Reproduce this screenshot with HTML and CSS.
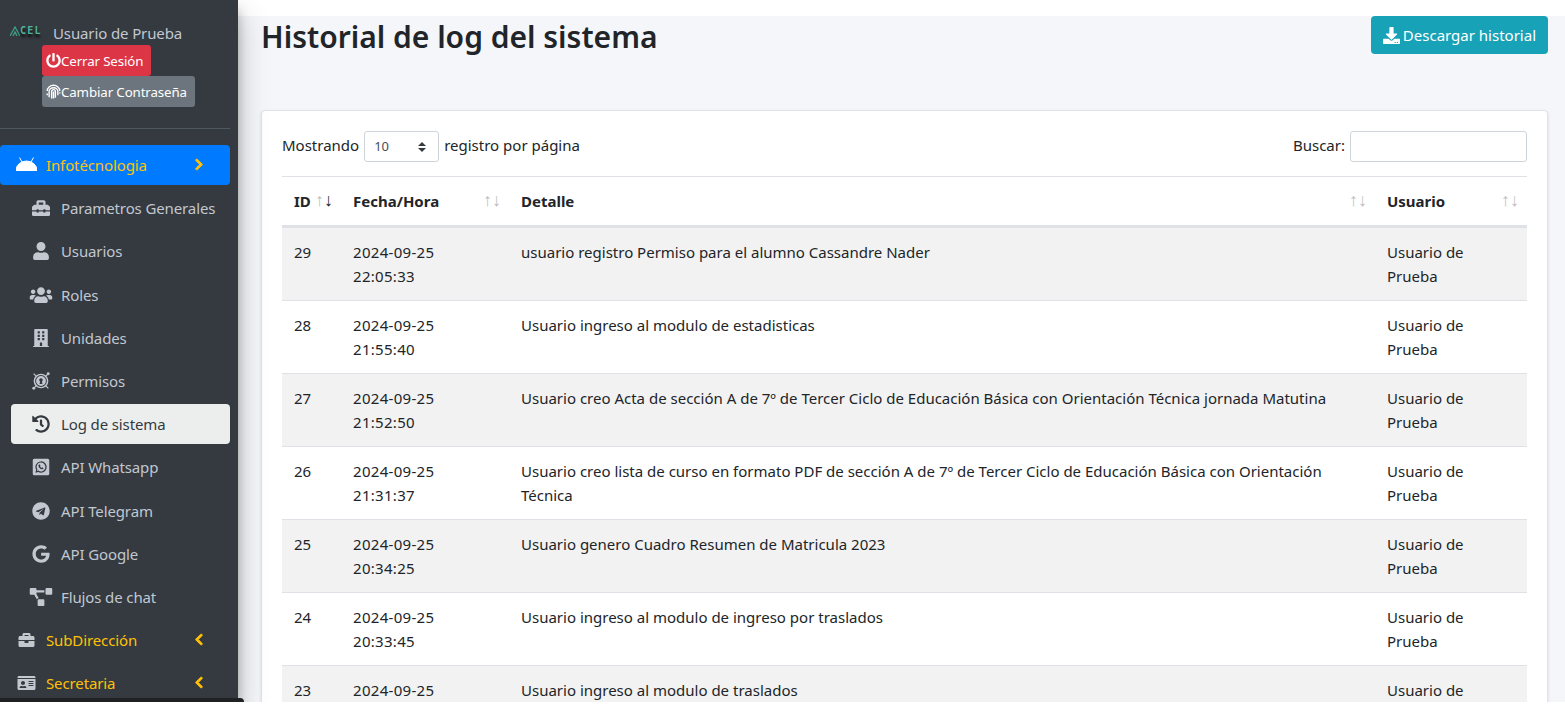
FILE: index.html
```html
<!DOCTYPE html>
<html lang="es">
<head>
<meta charset="utf-8">
<title>Historial de log del sistema</title>
<link rel="stylesheet" href="styles.css">
</head>
<body>
<div class="app">
  <aside class="sidebar">
    <div class="user">
      <div class="logo"><svg class="logo-mark" viewBox="0 0 10 10"><path d="M0 10 5 1l5 9M3 10l2-4 2 4" fill="none" stroke="#3f9f86" stroke-width="1.300"/></svg><span class="logo-text">CEL</span></div>
      <div class="user-info">
        <div class="user-name">Usuario de Prueba</div>
        <a class="btn-side btn-red"><svg class="btn-icon" viewBox="0 0 512 512"><path d="M400 54.1c63 45 104 118.6 104 201.9 0 136.8-110.8 247.7-247.5 248C120 504.3 8.2 393 8 256.4 7.9 173.1 48.9 99.3 111.8 54.2c11.7-8.3 28-4.8 35 7.7L162.6 90c5.9 10.5 3.1 23.8-6.6 31-41.5 30.8-68 79.6-68 134.9-.1 92.3 74.5 168.1 168 168.1 91.6 0 168.6-74.2 168-169.1-.3-51.8-24.7-101.8-68.1-134-9.7-7.2-12.4-20.5-6.5-30.9l15.8-28.1c7-12.4 23.2-16.1 34.8-7.8zM296 264V24c0-13.3-10.7-24-24-24h-32c-13.3 0-24 10.7-24 24v240c0 13.3 10.7 24 24 24h32c13.3 0 24-10.7 24-24z"/></svg>Cerrar Sesión</a>
        <a class="btn-side btn-grey"><svg class="btn-icon" viewBox="0 0 24 24" fill="none" stroke="#fff" stroke-width="2.200"><path d="M2 11a10 9 0 0 1 20 0M5 21v-9a7 6 0 0 1 14 0v6M9 23V12a3 3 0 0 1 6 0v10M12 12v11M2 15v3M22 13v2"/></svg>Cambiar Contraseña</a>
      </div>
    </div>
    <div class="divider"></div>
    <nav class="nav">
      <a class="nav-main nav-open">
        <svg class="main-icon" viewBox="0 0 21 16"><path d="M0 13.500a10.500 9.500 0 0 1 21 0zM3.500 0.500l2.500 4.500M17.500 0.500l-2.500 4.500" fill="#fff" stroke="#fff" stroke-width="1"/></svg>
        <span class="nav-label">Infotécnologia</span>
        <svg class="chev" viewBox="0 0 320 512"><path d="M285.476 272.971L91.132 467.314c-9.373 9.373-24.569 9.373-33.941 0l-22.667-22.667c-9.357-9.357-9.375-24.522-.04-33.901L188.505 256 34.484 101.255c-9.335-9.379-9.317-24.544.04-33.901l22.667-22.667c9.373-9.373 24.569-9.373 33.941 0L285.475 239.03c9.373 9.372 9.373 24.568.001 33.941z"/></svg>
      </a>
      <a class="nav-sub"><svg class="sub-icon" viewBox="0 0 512 512"><path d="M502.63 214.63l-45.25-45.25c-6-6-14.14-9.37-22.63-9.37H384V80c0-26.51-21.49-48-48-48H176c-26.51 0-48 21.49-48 48v80H77.25c-8.49 0-16.62 3.37-22.63 9.37L9.37 214.63c-6 6-9.37 14.14-9.37 22.63V320h128v-16c0-8.84 7.16-16 16-16h32c8.84 0 16 7.16 16 16v16h128v-16c0-8.84 7.16-16 16-16h32c8.84 0 16 7.16 16 16v16h128v-82.75c0-8.48-3.37-16.62-9.37-22.62zM320 160H192V96h128v64zm64 208c0 8.84-7.16 16-16 16h-32c-8.84 0-16-7.16-16-16v-16H192v16c0 8.84-7.16 16-16 16h-32c-8.84 0-16-7.16-16-16v-16H0v96c0 17.67 14.33 32 32 32h448c17.67 0 32-14.33 32-32v-96H384v16z"/></svg>Parametros Generales</a>
      <a class="nav-sub"><svg class="sub-icon" viewBox="0 0 448 512"><path d="M224 256c70.7 0 128-57.3 128-128S294.7 0 224 0 96 57.3 96 128s57.3 128 128 128zm89.6 32h-16.7c-22.2 10.2-46.9 16-72.9 16s-50.6-5.8-72.9-16h-16.7C60.2 288 0 348.2 0 422.4V464c0 26.5 21.5 48 48 48h352c26.5 0 48-21.5 48-48v-41.6c0-74.2-60.2-134.4-134.4-134.4z"/></svg>Usuarios</a>
      <a class="nav-sub"><svg class="sub-icon" viewBox="0 0 640 512"><path d="M96 224c35.3 0 64-28.7 64-64s-28.7-64-64-64-64 28.7-64 64 28.7 64 64 64zm448 0c35.3 0 64-28.7 64-64s-28.7-64-64-64-64 28.7-64 64 28.7 64 64 64zm32 32h-64c-17.6 0-33.5 7.1-45.1 18.6 40.3 22.1 68.9 62 75.1 109.4h66c17.7 0 32-14.3 32-32v-32c0-35.3-28.7-64-64-64zm-256 0c61.9 0 112-50.1 112-112S381.9 32 320 32 208 82.1 208 144s50.1 112 112 112zm76.8 32h-8.3c-20.8 10-43.9 16-68.5 16s-47.6-6-68.5-16h-8.3C179.6 288 128 339.6 128 403.2V432c0 26.5 21.5 48 48 48h288c26.5 0 48-21.5 48-48v-28.8c0-63.6-51.6-115.2-115.2-115.2zm-223.7-13.4C161.5 263.1 145.6 256 128 256H64c-35.3 0-64 28.7-64 64v32c0 17.7 14.3 32 32 32h65.9c6.3-47.4 34.9-87.3 75.2-109.4z"/></svg>Roles</a>
      <a class="nav-sub"><svg class="sub-icon" viewBox="0 0 448 512"><path d="M436 480h-20V24c0-13.255-10.745-24-24-24H56C42.745 0 32 10.745 32 24v456H12c-6.627 0-12 5.373-12 12v20h448v-20c0-6.627-5.373-12-12-12zM128 76c0-6.627 5.373-12 12-12h40c6.627 0 12 5.373 12 12v40c0 6.627-5.373 12-12 12h-40c-6.627 0-12-5.373-12-12V76zm0 96c0-6.627 5.373-12 12-12h40c6.627 0 12 5.373 12 12v40c0 6.627-5.373 12-12 12h-40c-6.627 0-12-5.373-12-12v-40zm52 148h-40c-6.627 0-12-5.373-12-12v-40c0-6.627 5.373-12 12-12h40c6.627 0 12 5.373 12 12v40c0 6.627-5.373 12-12 12zm76 160h-64v-84c0-6.627 5.373-12 12-12h40c6.627 0 12 5.373 12 12v84zm64-172c0 6.627-5.373 12-12 12h-40c-6.627 0-12-5.373-12-12v-40c0-6.627 5.373-12 12-12h40c6.627 0 12 5.373 12 12v40zm0-96c0 6.627-5.373 12-12 12h-40c-6.627 0-12-5.373-12-12v-40c0-6.627 5.373-12 12-12h40c6.627 0 12 5.373 12 12v40zm0-96c0 6.627-5.373 12-12 12h-40c-6.627 0-12-5.373-12-12V76c0-6.627 5.373-12 12-12h40c6.627 0 12 5.373 12 12v40z"/></svg>Unidades</a>
      <a class="nav-sub"><svg class="sub-icon" viewBox="1 1 22 22"><path fill-rule="evenodd" d="M12 3a9 9 0 1 0 0 18 9 9 0 0 0 0-18zm0 1.800a7.200 7.200 0 1 1 0 14.400 7.200 7.200 0 0 1 0-14.400z"/><path fill-rule="evenodd" d="M12 6a6 6 0 1 0 0 12 6 6 0 0 0 0-12zm0 2.500a2.200 2.200 0 0 1 1.100 4.100l.7 3.100h-3.600l.7-3.100A2.200 2.200 0 0 1 12 8.500z"/><path d="M3 3l4 4M21 3l-4 4M3 21l4-4M21 21l-4-4" stroke="#c2c7d0" stroke-width="1.500"/><circle cx="20.800" cy="3.200" r="1.800"/><circle cx="3.200" cy="20.800" r="1.800"/></svg>Permisos</a>
      <a class="nav-sub nav-active"><svg class="sub-icon" viewBox="0 0 512 512"><path d="M504 255.531c.253 136.64-111.18 248.372-247.82 248.468-59.015.042-113.223-20.53-155.822-54.911-11.077-8.94-11.905-25.541-1.839-35.607l11.267-11.267c8.609-8.609 22.353-9.551 31.891-1.984C173.062 425.135 212.781 440 256 440c101.705 0 184-82.311 184-184 0-101.705-82.311-184-184-184-48.814 0-93.149 18.969-126.068 49.932l50.754 50.754c10.08 10.08 2.941 27.314-11.313 27.314H24c-8.837 0-16-7.163-16-16V38.627c0-14.254 17.234-21.393 27.314-11.314l49.372 49.372C129.209 34.136 189.552 8 256 8c136.81 0 247.747 110.78 248 247.531zm-180.912 78.784l9.823-12.63c8.138-10.463 6.253-25.542-4.21-33.679L288 256.349V152c0-13.255-10.745-24-24-24h-16c-13.255 0-24 10.745-24 24v135.651l65.409 50.874c10.463 8.137 25.541 6.253 33.679-4.21z"/></svg>Log de sistema</a>
      <a class="nav-sub"><svg class="sub-icon" viewBox="0 0 24 24"><path fill-rule="evenodd" d="M3 1h18a2 2 0 0 1 2 2v18a2 2 0 0 1-2 2H3a2 2 0 0 1-2-2V3a2 2 0 0 1 2-2zm9 3.500a7.500 7.500 0 0 0-6.400 11.300L4.500 19.500l3.800-1a7.500 7.500 0 1 0 3.700-14zm0 1.600a5.900 5.900 0 1 1-3.400 10.700l-1.900.5.500-1.800A5.900 5.900 0 0 1 12 6.100zM9.500 8.500c-.8.600-1.100 1.500-.7 2.700.6 1.700 2.300 3.300 4 3.800 1.100.3 2-.2 2.400-1l-.1-.8-1.500-.8-.8.8c-.9-.4-1.800-1.200-2.200-2.100l.7-.8-.7-1.700z"/></svg>API Whatsapp</a>
      <a class="nav-sub"><svg class="sub-icon" viewBox="0 0 496 512"><path d="M248 8C111 8 0 119 0 256s111 248 248 248 248-111 248-248S385 8 248 8zm121.8 169.9l-40.7 191.8c-3 13.6-11.1 16.9-22.4 10.5l-62-45.7-29.9 28.8c-3.3 3.3-6.1 6.1-12.5 6.1l4.4-63.1 114.9-103.8c5-4.4-1.1-6.9-7.7-2.500l-142 89.4-61.2-19.1c-13.3-4.2-13.6-13.3 2.8-19.7l239.1-92.2c11.1-4 20.8 2.7 17.2 19.5z"/></svg>API Telegram</a>
      <a class="nav-sub"><svg class="sub-icon" viewBox="0 0 488 512"><path d="M488 261.8C488 403.3 387.1 504 248 504 110.8 504 0 393.2 0 256S110.8 8 248 8c66.8 0 123 24.5 166.3 64.9l-67.5 64.9C258.5 52.6 94.3 116.6 94.3 256c0 86.5 69.1 156.6 153.7 156.6 98.2 0 135-70.4 140.8-106.9H248v-85.3h236.1c2.3 12.7 3.9 24.9 3.9 41.4z"/></svg>API Google</a>
      <a class="nav-sub"><svg class="sub-icon" viewBox="0 0 640 512"><path d="M384 320H256c-17.67 0-32 14.33-32 32v128c0 17.67 14.33 32 32 32h128c17.67 0 32-14.33 32-32V352c0-17.67-14.33-32-32-32zM192 32c0-17.67-14.33-32-32-32H32C14.33 0 0 14.33 0 32v128c0 17.67 14.33 32 32 32h95.72l73.16 128.04C211.98 300.98 232.4 288 256 288h.28L192 175.51V128h224V64H192V32zM608 0H480c-17.67 0-32 14.33-32 32v128c0 17.67 14.33 32 32 32h128c17.67 0 32-14.33 32-32V32c0-17.67-14.33-32-32-32z"/></svg>Flujos de chat</a>
      <a class="nav-main">
        <svg class="main-icon" viewBox="0 0 512 512"><path d="M320 336c0 8.84-7.16 16-16 16h-96c-8.84 0-16-7.16-16-16v-48H0v144c0 25.6 22.4 48 48 48h416c25.6 0 48-22.4 48-48V288H320v48zm144-208h-80V80c0-25.6-22.4-48-48-48H176c-25.6 0-48 22.4-48 48v48H48c-25.6 0-48 22.4-48 48v80h512v-80c0-25.6-22.4-48-48-48zm-144 0H192V96h128v32z"/></svg>
        <span class="nav-label">SubDirección</span>
        <svg class="chev" viewBox="0 0 320 512"><path d="M34.52 239.03L228.87 44.69c9.37-9.37 24.57-9.37 33.94 0l22.67 22.67c9.36 9.36 9.37 24.52.04 33.9L131.49 256l154.02 154.75c9.34 9.38 9.32 24.54-.04 33.9l-22.67 22.67c-9.37 9.37-24.57 9.37-33.94 0L34.52 272.97c-9.37-9.37-9.37-24.57 0-33.94z"/></svg>
      </a>
      <a class="nav-main">
        <svg class="main-icon" viewBox="0 0 576 512"><path d="M528 32H48C21.5 32 0 53.5 0 80v16h576V80c0-26.5-21.5-48-48-48zM0 432c0 26.5 21.5 48 48 48h480c26.5 0 48-21.5 48-48V128H0v304zm352-232c0-4.4 3.6-8 8-8h144c4.4 0 8 3.6 8 8v16c0 4.4-3.6 8-8 8H360c-4.4 0-8-3.6-8-8v-16zm0 64c0-4.4 3.6-8 8-8h144c4.4 0 8 3.6 8 8v16c0 4.4-3.6 8-8 8H360c-4.4 0-8-3.6-8-8v-16zm0 64c0-4.4 3.6-8 8-8h144c4.4 0 8 3.6 8 8v16c0 4.4-3.6 8-8 8H360c-4.4 0-8-3.6-8-8v-16zM176 192c35.3 0 64 28.7 64 64s-28.7 64-64 64-64-28.7-64-64 28.7-64 64-64zM67.1 396.2C75.5 370.5 99.6 352 128 352h8.2c12.3 5.1 25.7 8 39.8 8s27.6-2.9 39.8-8h8.2c28.4 0 52.5 18.5 60.9 44.2 3.2 9.9-5.2 19.8-15.6 19.8H82.7c-10.4 0-18.8-10-15.6-19.8z"/></svg>
        <span class="nav-label">Secretaria</span>
        <svg class="chev" viewBox="0 0 320 512"><path d="M34.52 239.03L228.87 44.69c9.37-9.37 24.57-9.37 33.94 0l22.67 22.67c9.36 9.36 9.37 24.52.04 33.9L131.49 256l154.02 154.75c9.34 9.38 9.32 24.54-.04 33.9l-22.67 22.67c-9.37 9.37-24.57 9.37-33.94 0L34.52 272.97c-9.37-9.37-9.37-24.57 0-33.94z"/></svg>
      </a>
    </nav>
  </aside>
  <main class="main">
    <div class="content">
      <header class="page-head">
        <h1 class="title">Historial de log del sistema</h1>
        <a class="btn-download"><svg class="dl-icon" viewBox="0 0 512 512"><path d="M216 0h80c13.3 0 24 10.7 24 24v168h87.7c17.8 0 26.7 21.5 14.1 34.1L269.7 378.3c-7.5 7.5-19.8 7.5-27.3 0L90.1 226.1c-12.6-12.6-3.7-34.1 14.1-34.1H192V24c0-13.3 10.7-24 24-24zm296 376v112c0 13.3-10.7 24-24 24H24c-13.3 0-24-10.7-24-24V376c0-13.3 10.7-24 24-24h146.7l49 49c20.1 20.1 52.5 20.1 72.6 0l49-49H488c13.3 0 24 10.7 24 24zm-124 88c0-11-9-20-20-20s-20 9-20 20 9 20 20 20 20-9 20-20zm64 0c0-11-9-20-20-20s-20 9-20 20 9 20 20 20 20-9 20-20z"/></svg>Descargar historial</a>
      </header>
      <section class="card">
        <div class="controls">
          <label class="ctrl">Mostrando <select class="page-size"><option>10</option></select> registro por página</label>
          <label class="ctrl">Buscar: <input class="search" type="text"></label>
        </div>
        <table class="table">
          <colgroup><col class="c-id"><col class="c-date"><col class="c-detail"><col class="c-user"></colgroup>
          <thead>
            <tr>
              <th>ID<span class="sort"><i class="off">↑</i><i class="on">↓</i></span></th>
              <th>Fecha/Hora<span class="sort"><i class="off">↑</i><i class="off">↓</i></span></th>
              <th>Detalle<span class="sort"><i class="off">↑</i><i class="off">↓</i></span></th>
              <th>Usuario<span class="sort"><i class="off">↑</i><i class="off">↓</i></span></th>
            </tr>
          </thead>
          <tbody>
            <tr><td>29</td><td>2024-09-25<br>22:05:33</td><td>usuario registro Permiso para el alumno Cassandre Nader</td><td>Usuario de Prueba</td></tr>
            <tr><td>28</td><td>2024-09-25<br>21:55:40</td><td>Usuario ingreso al modulo de estadisticas</td><td>Usuario de Prueba</td></tr>
            <tr><td>27</td><td>2024-09-25<br>21:52:50</td><td>Usuario creo Acta de sección A de 7º de Tercer Ciclo de Educación Básica con Orientación Técnica jornada Matutina</td><td>Usuario de Prueba</td></tr>
            <tr><td>26</td><td>2024-09-25<br>21:31:37</td><td>Usuario creo lista de curso en formato PDF de sección A de 7º de Tercer Ciclo de Educación Básica con Orientación Técnica</td><td>Usuario de Prueba</td></tr>
            <tr><td>25</td><td>2024-09-25<br>20:34:25</td><td>Usuario genero Cuadro Resumen de Matricula 2023</td><td>Usuario de Prueba</td></tr>
            <tr><td>24</td><td>2024-09-25<br>20:33:45</td><td>Usuario ingreso al modulo de ingreso por traslados</td><td>Usuario de Prueba</td></tr>
            <tr><td>23</td><td>2024-09-25</td><td>Usuario ingreso al modulo de traslados</td><td>Usuario de</td></tr>
          </tbody>
        </table>
      </section>
    </div>
  </main>
  <div class="corner-bar"></div>
</div>
</body>
</html>
```
FILE: styles.css
```css
* { box-sizing: border-box; }
html, body { margin: 0; padding: 0; background: #fff; }
body { font-family: "Noto Sans", "Open Sans", sans-serif; font-size: 15px; line-height: 24px; color: #212529; overflow: hidden; }
.app { position: relative; display: flex; height: 702px; overflow: hidden; }

.sidebar { width: 238px; flex: none; background: #343a40; padding-right: 8px; color: #c2c7d0; letter-spacing: -.12px; box-shadow: 0 14px 28px rgba(0,0,0,.25), 0 10px 10px rgba(0,0,0,.22); z-index: 2; }
.user { display: flex; padding: 21px 0 21px 10px; }
.logo { width: 32px; height: 14px; margin-top: 3px; display: flex; align-items: center; flex: none; }
.logo-mark { width: 10px; height: 10px; flex: none; }
.logo-text { font-family: "DejaVu Sans Mono", monospace; font-size: 10px; font-weight: 700; line-height: 12px; letter-spacing: 1.200px; color: #4fb39a; text-shadow: 0 3px 3px #000; }
.user-info { display: flex; flex-direction: column; align-items: flex-start; }
.user-name { padding-left: 11px; height: 24px; white-space: nowrap; }
.btn-side { display: flex; align-items: center; height: 31px; padding: 0 8px 0 4px; color: #fff; font-size: 13.300px; border-radius: 3px; white-space: nowrap; }
.btn-red { background: #dc3545; }
.btn-grey { background: #6c757d; }
.btn-icon { width: 15px; height: 15px; fill: #fff; flex: none; }
.btn-grey .btn-icon { fill: none; }
.divider { height: 1px; background: #4f5962; margin-bottom: 16px; }

.nav { display: flex; flex-direction: column; gap: 3.200px; }
.nav-main, .nav-sub { display: flex; align-items: center; height: 40px; flex: none; border-radius: 4px; white-space: nowrap; }
.nav-main { padding-left: 16px; color: #ffc107; }
.nav-open { background: #007bff; }
.main-icon { width: 21px; height: 16px; fill: #c2c7d0; flex: none; margin-right: 9px; }
.nav-open .main-icon { fill: #fff; }
.nav-label { flex: 1; }
.chev { width: 10px; height: 13px; fill: #ffc107; stroke: #ffc107; stroke-width: 36px; flex: none; margin-right: 26px; margin-top: -2px; }
.nav-sub { margin-left: 11px; padding-left: 18px; color: #c2c7d0; }
.sub-icon { width: 24px; height: 18px; fill: #c2c7d0; flex: none; margin-right: 8px; }
.nav-active { background: #eceeee; color: #343a40; }
.nav-active .sub-icon { fill: #343a40; }

.main { flex: 1; min-width: 0; padding-top: 16px; background: #fff; }
.content { height: 100%; background: #f4f6f9; padding: 0 17px 0 23px; overflow: hidden; }
.page-head { display: flex; justify-content: space-between; align-items: flex-start; height: 94px; }
.title { margin: 0; font-size: 30px; font-weight: 600; line-height: 42px; color: #212529; }
.btn-download { display: flex; align-items: center; height: 38px; padding: 0 12px; background: #17a2b8; color: #fff; border-radius: 4px; }
.dl-icon { width: 17px; height: 17px; fill: #fff; margin-right: 3px; }

.card { background: #fff; border: 1px solid #e2e3e7; border-radius: 4px; padding: 20px; box-shadow: 0 1px 3px rgba(0,0,0,.12); }
.controls { display: flex; justify-content: space-between; height: 31px; margin-bottom: 14px; }
.ctrl { display: flex; align-items: flex-start; gap: 5px; line-height: 29px; white-space: nowrap; }
.page-size { appearance: none; width: 75px; height: 31px; padding: 0 9px; font: inherit; font-size: 13px; color: #495057; border: 1px solid #ced4da; border-radius: 3px; background: #fff url("data:image/svg+xml,%3Csvg xmlns='http://www.w3.org/2000/svg' width='8' height='10'%3E%3Cpath d='M0 4 4 0l4 4zM0 6l4 4 4-4z' fill='%23343a40'/%3E%3C/svg%3E") no-repeat right 12px center; }
.search { width: 177px; height: 31px; border: 1px solid #ced4da; border-radius: 3px; background: #fff; }

.table { width: 100%; table-layout: fixed; border-collapse: collapse; }
.c-id { width: 59px; }
.c-date { width: 168px; }
.c-detail { width: 866px; }
.c-user { width: 152px; }
.table th { position: relative; padding: 12px; text-align: left; font-weight: 700; border-top: 1px solid #dee2e6; border-bottom: 3px solid #dee2e6; }
.table td { padding: 12px; vertical-align: top; border-bottom: 1px solid #dee2e6; }
.table td:nth-child(2) { letter-spacing: .3px; }
.table tbody tr:nth-child(odd) { background: #f2f2f2; }
.sort { position: absolute; right: 8px; top: 10px; font-size: 18px; line-height: 24px; font-weight: 400; display: flex; }
.sort i { font-style: normal; }
.off { opacity: .3; }
.on { opacity: 1; }

.corner-bar { position: absolute; left: 0; bottom: 0; width: 244px; height: 4px; background: #1f2123; border-top-right-radius: 4px; z-index: 3; }
```
